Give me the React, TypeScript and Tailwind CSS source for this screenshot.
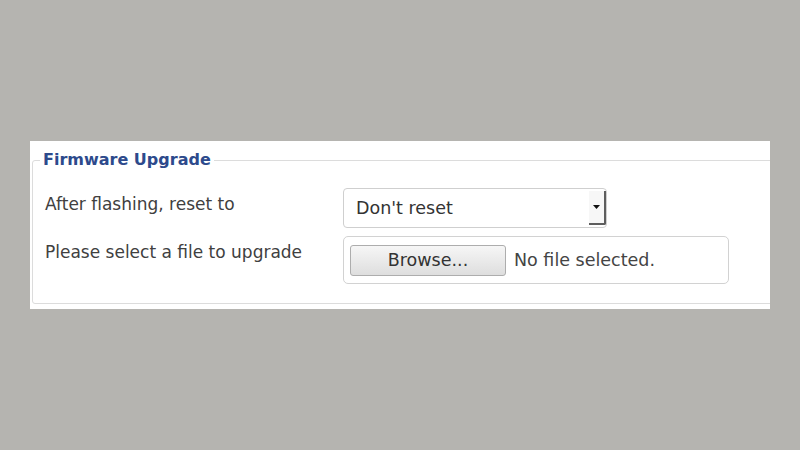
const font = { fontFamily: '"DejaVu Sans", Verdana, sans-serif' }

function FakeSelect() {
  return (
    <div className="relative flex h-[40px] w-[264px] items-center rounded-[4px] border border-[#cfcfcf] bg-white pl-[12px] text-[17.5px] text-[#333]">
      <span>Don&apos;t reset</span>
      <div className="absolute right-0 top-[2px] bottom-[2px] flex w-[17px] items-center justify-center border-r-[2px] border-b-[2px] border-[#5e5e5e] rounded-br-[2px] bg-[#f7f7f7]">
        <svg width="7" height="4" viewBox="0 0 7 4"><path d="M0 0h7L3.5 4z" fill="#111" /></svg>
      </div>
    </div>
  )
}

function FileBox() {
  return (
    <div className="flex h-[48px] w-[386px] items-center gap-[8px] rounded-[5px] border border-[#d2d2d2] bg-white pl-[6px]">
      <button type="button" className="h-[31px] w-[156px] rounded-[3px] border border-[#adadad] bg-gradient-to-b from-[#f6f6f6] to-[#dedede] text-[17.5px] text-[#333]">Browse...</button>
      <span className="text-[17.5px] text-[#444]">No file selected.</span>
    </div>
  )
}

export default function App() {
  return (
    <div className="h-[450px] w-[800px] bg-[#b5b4b0] pt-[141px] pl-[30px]" style={font}>
      <div className="h-[168px] w-[740px] overflow-hidden bg-white pt-[9px] pl-[2px]">
        <fieldset className="w-[760px] rounded-[3px] border border-[#dcdcdc] pb-[19px] pl-[12px]">
          <legend className="-ml-[5px] px-[3px] text-[16px] font-bold leading-[20px] text-[#2d4a8c]">Firmware Upgrade</legend>
          <div className="mt-[18px] flex flex-col gap-[8px] text-[17px] text-[#404040]">
            <div className="flex">
              <div className="w-[298px] pt-[6px] leading-[20px]">After flashing, reset to</div>
              <FakeSelect />
            </div>
            <div className="flex">
              <div className="w-[298px] pt-[6px] leading-[20px]">Please select a file to upgrade</div>
              <FileBox />
            </div>
          </div>
        </fieldset>
      </div>
    </div>
  )
}
